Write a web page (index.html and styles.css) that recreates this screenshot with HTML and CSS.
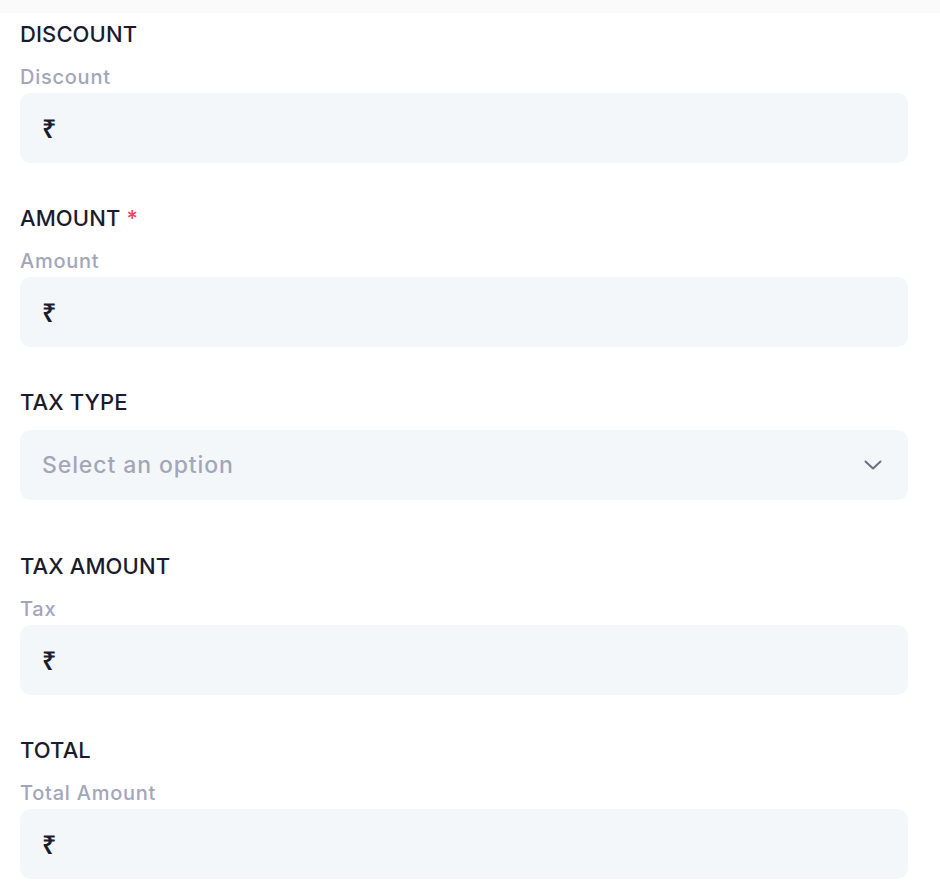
FILE: index.html
```html
<!DOCTYPE html>
<html lang="en">
<head>
<meta charset="utf-8">
<title>Form</title>
<link rel="stylesheet" href="styles.css">
</head>
<body>
<div class="topbar"></div>
<form class="form">
  <div class="field">
    <div class="heading">DISCOUNT</div>
    <div class="sublabel">Discount</div>
    <div class="input"><span class="cur">₹</span></div>
  </div>
  <div class="field">
    <div class="heading">AMOUNT <span class="req">*</span></div>
    <div class="sublabel">Amount</div>
    <div class="input"><span class="cur">₹</span></div>
  </div>
  <div class="field field-select">
    <div class="heading">TAX TYPE</div>
    <div class="input select">
      <span class="placeholder">Select an option</span>
      <svg class="chev" width="18" height="10" viewBox="0 0 18 10" aria-hidden="true"><path d="M1.5 1.5 L9 8.5 L16.5 1.5" fill="none" stroke="#6b6e85" stroke-width="2" stroke-linecap="round" stroke-linejoin="round"/></svg>
    </div>
  </div>
  <div class="field">
    <div class="heading">TAX AMOUNT</div>
    <div class="sublabel">Tax</div>
    <div class="input"><span class="cur">₹</span></div>
  </div>
  <div class="field">
    <div class="heading">TOTAL</div>
    <div class="sublabel">Total Amount</div>
    <div class="input"><span class="cur">₹</span></div>
  </div>
</form>
</body>
</html>
```

FILE: styles.css
```css
html, body {
  margin: 0;
  padding: 0;
  background: #ffffff;
}
body {
  font-family: Inter, "Noto Sans", sans-serif;
  width: 940px;
}
.topbar {
  height: 13px;
  background: #fafafa;
}
.form {
  display: flex;
  flex-direction: column;
  padding: 8px 32px 0 20px;
}
.field {
  display: flex;
  flex-direction: column;
  margin-bottom: 42px;
}
.field-select {
  margin-bottom: 53px;
}
.heading {
  font-size: 22px;
  line-height: 24px;
  font-weight: 500;
  color: #1b1b2f;
  padding-top: 1px;
  margin-bottom: 20px;
  letter-spacing: 0.1px;
}
.field-select .heading {
  margin-bottom: 16px;
}
.req {
  color: #f0436a;
}
.sublabel {
  font-size: 20px;
  line-height: 22px;
  font-weight: 500;
  color: #a3a6b9;
  margin-bottom: 5px;
  letter-spacing: 0.75px;
}
.input {
  height: 70px;
  background: #f4f7fa;
  border-radius: 10px;
  display: flex;
  align-items: center;
  padding: 0 22px;
  box-sizing: border-box;
}
.cur {
  font-family: "Noto Sans", "DejaVu Sans", sans-serif;
  font-size: 25px;
  font-weight: 600;
  color: #1b1b2f;
  line-height: 1;
}
.select {
  justify-content: space-between;
  padding: 0 26px 0 22px;
}
.placeholder {
  font-size: 23px;
  font-weight: 500;
  color: #a3a6b9;
  letter-spacing: 0.9px;
}
.chev {
  display: block;
}
```
